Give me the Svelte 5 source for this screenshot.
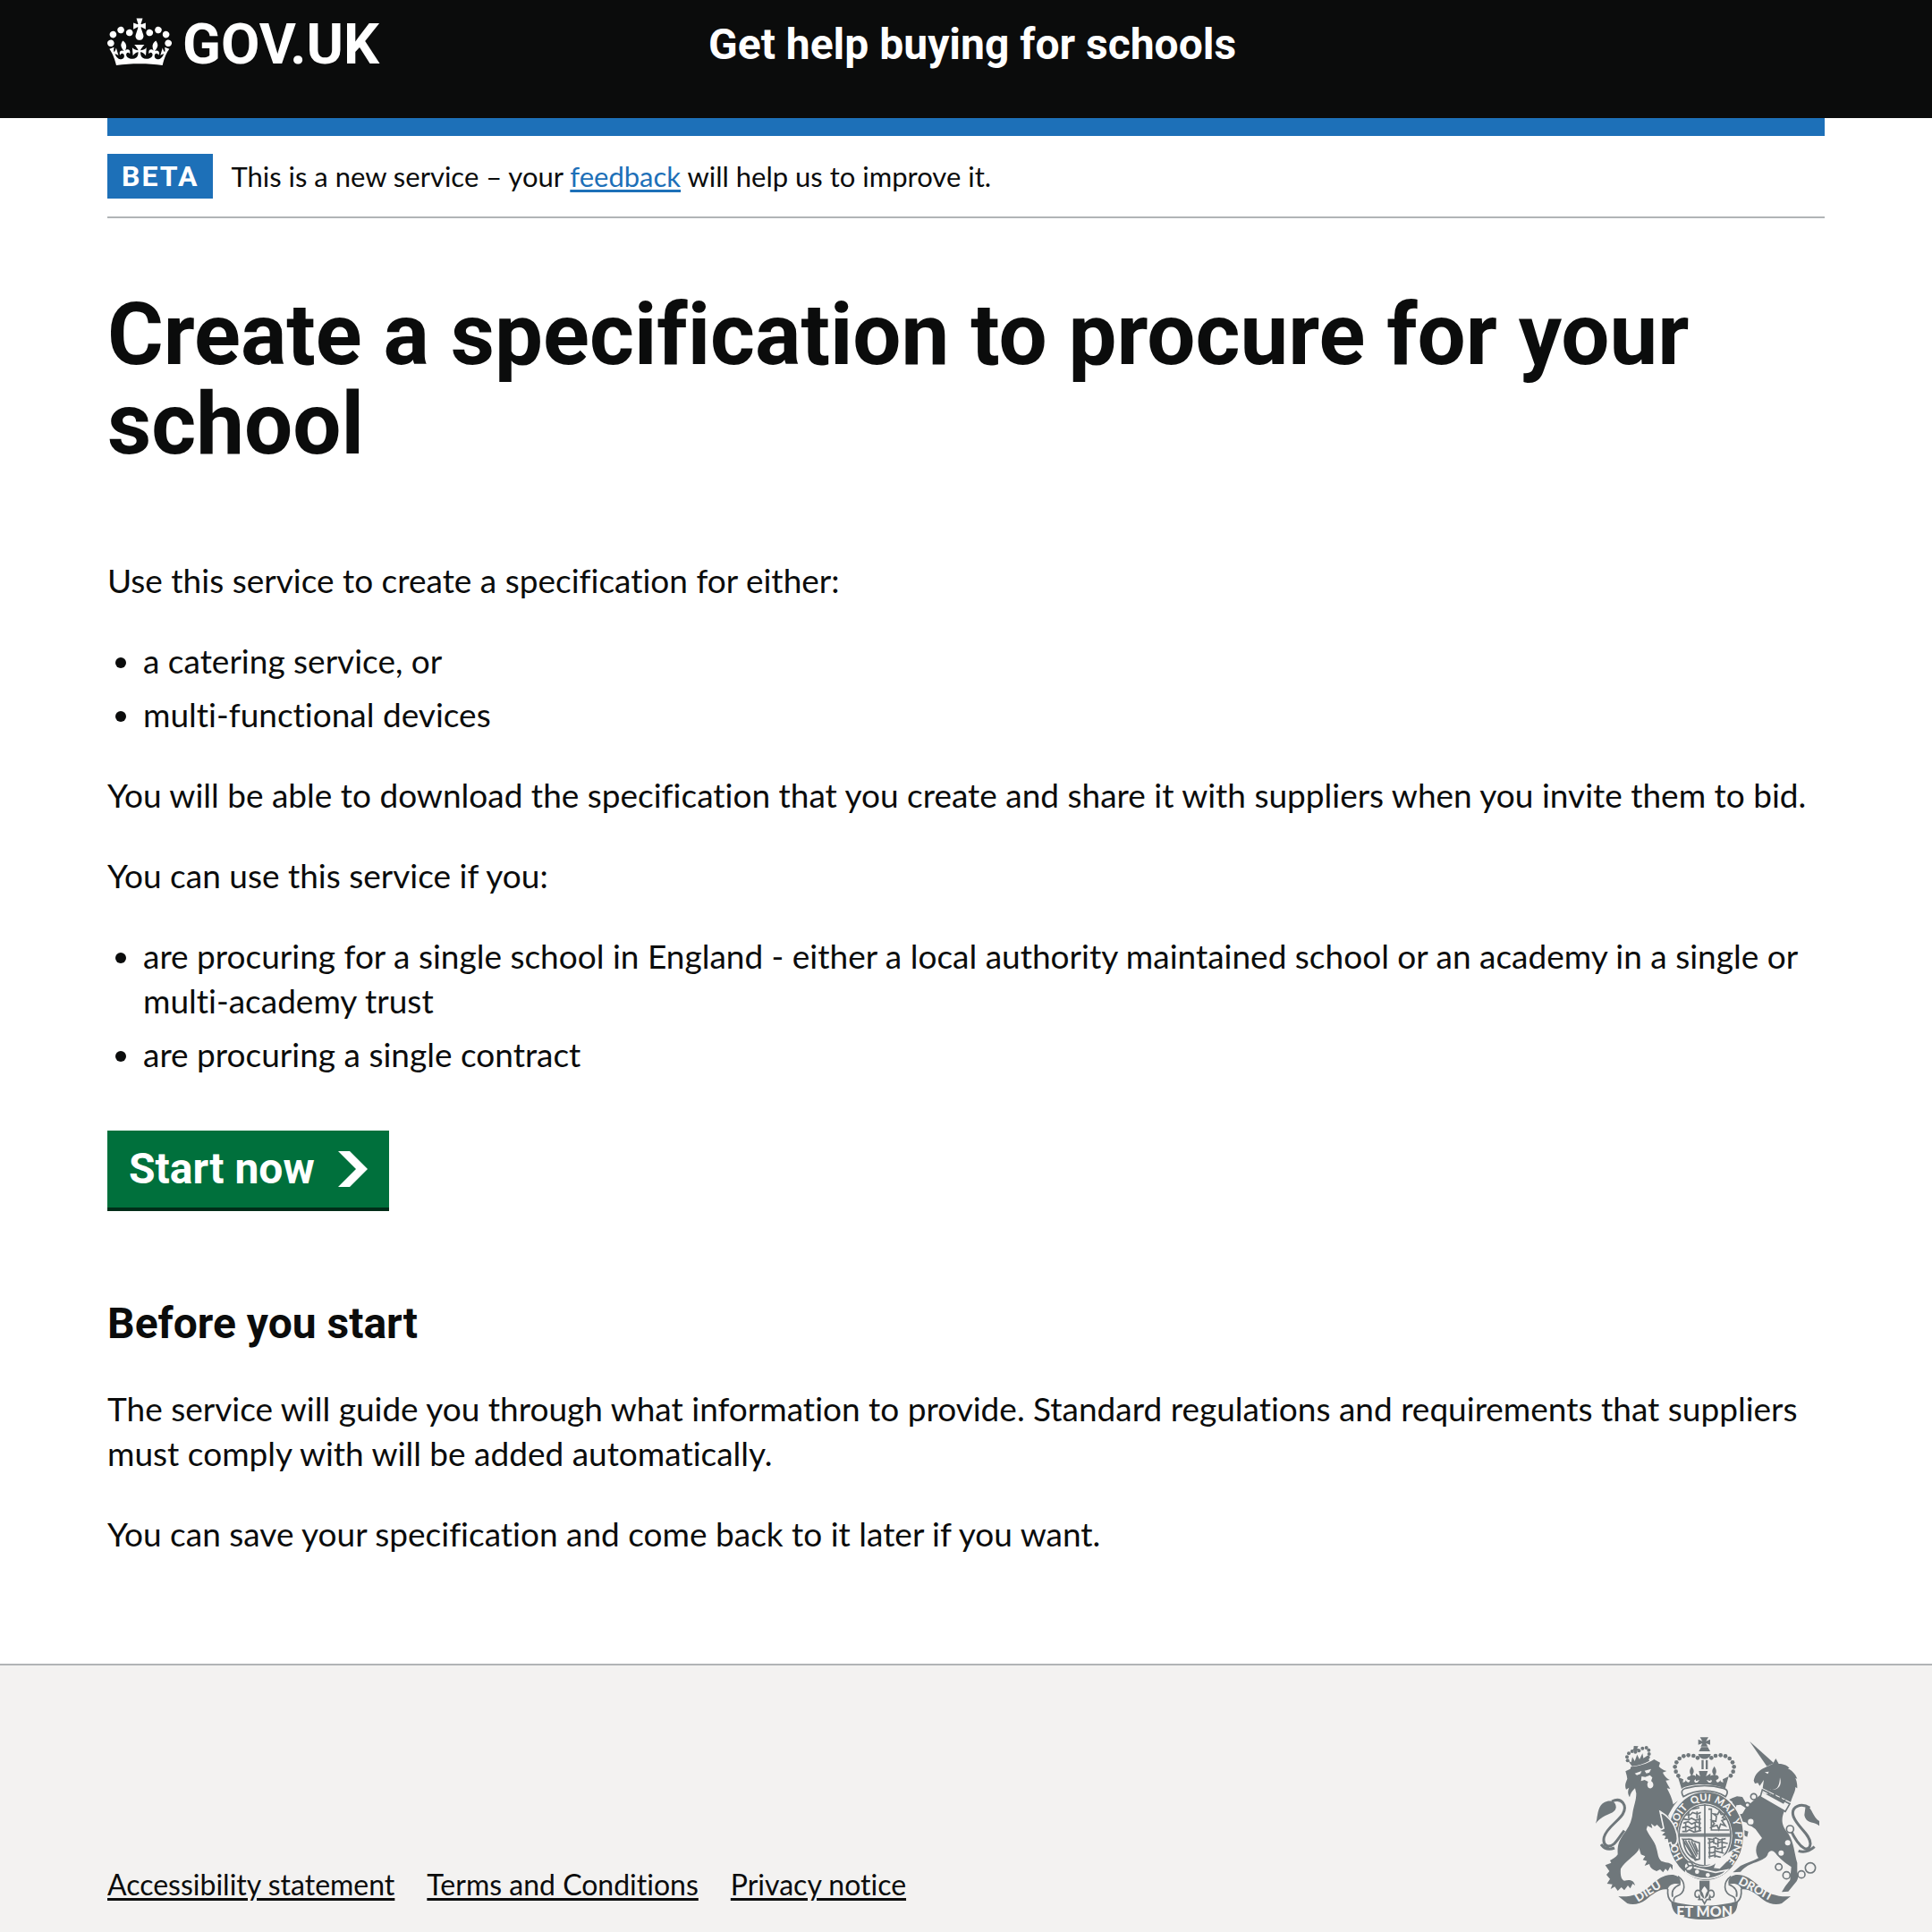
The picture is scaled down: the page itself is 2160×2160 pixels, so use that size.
<script>
  const footerLinks = ['Accessibility statement', 'Terms and Conditions', 'Privacy notice'];
  const beads = [[384, 106], [370, 99], [353, 97], [337, 100], [323, 108], [313, 121], [308, 136], [311, 152], [319, 166]];
  const lionBeads = [[149, 115], [147, 103], [153, 91], [164, 84], [175, 86], [187, 82], [199, 74], [212, 72], [220, 80], [221, 93], [218, 104]];
  const rings = [[572, 236, 10], [551, 264, 8], [562, 320, 12], [694, 345, 12], [656, 472, 11], [682, 500, 12], [732, 497, 12], [762, 475, 17]];
</script>

<svelte:head><title>Create a specification to procure for your school</title></svelte:head>

<header class="header">
  <div class="container header-row">
    <a class="logo" href="#home">
      <svg class="crown" viewBox="0 0 132 97" aria-hidden="true">
        <path fill="currentColor" fill-rule="evenodd" d="M25 30.2c3.5 1.5 7.7-.2 9.1-3.7 1.5-3.6-.2-7.8-3.9-9.2-3.6-1.4-7.6.3-9.1 3.9-1.4 3.5.3 7.5 3.9 9zM9 39.5c3.6 1.5 7.8-.2 9.2-3.7 1.5-3.6-.2-7.8-3.9-9.1-3.6-1.5-7.6.2-9.1 3.8-1.4 3.5.3 7.5 3.8 9zM4.4 57.2c3.5 1.5 7.7-.2 9.1-3.8 1.5-3.6-.2-7.7-3.9-9.1-3.5-1.5-7.6.3-9.1 3.8-1.4 3.5.3 7.6 3.9 9.1zm38.3-21.4c3.5 1.5 7.7-.2 9.1-3.8 1.5-3.6-.2-7.7-3.9-9.1-3.6-1.5-7.6.3-9.1 3.8-1.3 3.6.4 7.7 3.9 9.1zm64.4-5.6c-3.6 1.5-7.8-.2-9.1-3.7-1.5-3.6.2-7.8 3.8-9.2 3.6-1.4 7.7.3 9.2 3.9 1.3 3.5-.4 7.5-3.9 9zm15.9 9.3c-3.6 1.5-7.7-.2-9.1-3.7-1.5-3.6.2-7.8 3.7-9.1 3.6-1.5 7.7.2 9.2 3.8 1.5 3.5-.3 7.5-3.8 9zm4.7 17.7c-3.6 1.5-7.8-.2-9.2-3.8-1.5-3.6.2-7.7 3.9-9.1 3.6-1.5 7.7.3 9.2 3.8 1.3 3.5-.4 7.6-3.9 9.1zM89.3 35.8c-3.6 1.5-7.8-.2-9.2-3.8-1.4-3.6.2-7.7 3.9-9.1 3.6-1.5 7.7.3 9.2 3.8 1.4 3.6-.3 7.7-3.9 9.1zM69.7 17.7l8.9 4.7V9.3l-8.9 2.8c-.2-.3-.5-.6-.9-.9L72.4 0H59.6l3.5 11.2c-.3.3-.6.5-.9.9l-8.8-2.8v13.1l8.8-4.7c.3.3.6.7.9.9l-5 15.4v.1c-.2.8-.4 1.6-.4 2.4 0 4.1 3.1 7.5 7 8.1h.2c.3 0 .7.1 1 .1.4 0 .7 0 1-.1h.2c4-.6 7.1-4.1 7.1-8.1 0-.8-.1-1.7-.4-2.4V34l-5.1-15.4c.4-.2.7-.6 1-.9zM66 92.8c16.9 0 32.8 1.1 47.1 3.2 4-16.9 8.9-26.7 14-33.5l-9.6-3.4c1 4.9 1.1 7.2 0 10.2-1.5-1.4-3-4.3-4.2-8.7L108.6 76c2.8-2 5-3.2 7.5-3.3-4.4 9.4-10 11.9-13.6 11.2-4.3-.8-6.3-4.6-5.6-7.9 1-4.7 5.7-5.9 8-.5 4.3-8.7-3-11.4-7.6-8.8 7.1-7.2 7.9-13.5 2.1-21.1-8 6.1-8.1 12.3-4.5 20.8-4.7-5.4-12.1-2.5-9.5 6.2 3.4-5.2 7.9-2 7.2 3.1-.6 4.3-6.4 7.8-13.5 7.2-10.3-.9-10.9-8-11.2-13.8 2.5-.5 7.1 1.8 11 7.3L80.2 60c-4.1 4.4-8 5.3-12.3 5.4 1.4-4.4 8-11.6 8-11.6H55.5s6.4 7.2 7.9 11.6c-4.2-.1-8-1-12.3-5.4l1.4 16.4c3.9-5.5 8.5-7.7 10.9-7.3-.3 5.8-.9 12.8-11.1 13.8-7.2.6-12.9-2.9-13.5-7.2-.7-5 3.8-8.3 7.1-3.1 2.7-8.7-4.6-11.6-9.4-6.2 3.7-8.5 3.6-14.7-4.6-20.8-5.8 7.6-5 13.9 2.2 21.1-4.7-2.6-11.9.1-7.7 8.8 2.3-5.5 7.1-4.2 8.1.5.7 3.3-1.3 7.1-5.7 7.9-3.5.7-9-1.8-13.5-11.2 2.5.1 4.7 1.3 7.5 3.3l-4.7-15.4c-1.2 4.4-2.7 7.2-4.3 8.7-1.1-3-.9-5.3 0-10.2l-9.5 3.4c5 6.9 9.9 16.7 14 33.5 14.8-2.1 30.8-3.2 47.7-3.2z" />
      </svg>
      <span>GOV.UK</span>
    </a>
    <a class="service" href="#service">Get help buying for schools</a>
  </div>
</header>

<div class="container">
  <div class="phase">
    <strong class="tag">BETA</strong>
    <span>This is a new service – your <a href="#feedback">feedback</a> will help us to improve it.</span>
  </div>

  <main>
    <h1>Create a specification to procure for your school</h1>
    <p>Use this service to create a specification for either:</p>
    <ul>
      <li>a catering service, or</li>
      <li>multi-functional devices</li>
    </ul>
    <p>You will be able to download the specification that you create and share it with suppliers when you invite them to bid.</p>
    <p>You can use this service if you:</p>
    <ul>
      <li>are procuring for a single school in England - either a local authority maintained school or an academy in a single or multi-academy trust</li>
      <li>are procuring a single contract</li>
    </ul>
    <button class="start" type="button">
      Start now
      <svg viewBox="0 0 33 40" aria-hidden="true"><path fill="currentColor" d="M0 0h13l20 20-20 20H0l20-20z" /></svg>
    </button>
    <h2>Before you start</h2>
    <p>The service will guide you through what information to provide. Standard regulations and requirements that suppliers must comply with will be added automatically.</p>
    <p>You can save your specification and come back to it later if you want.</p>
  </main>
</div>

<footer class="footer">
  <div class="container footer-row">
    <nav aria-label="Support links">
      {#each footerLinks as label}
        <a href="#{label.split(' ')[0].toLowerCase()}">{label}</a>
      {/each}
    </nav>
    <svg class="crest" viewBox="42 36 750 612" role="img" aria-label="Royal coat of arms">
      <defs>
        <path id="motto" d="M411 483A99 116 0 0 1 411 251A99 116 0 0 1 411 483" />
      </defs>

      <!-- lion -->
      <g class="ink">
        {#each lionBeads as [x, y]}<circle cx={x} cy={y} r="6" />{/each}
        <path d="M170 66l15 1-4 7 8 3-9 4 1 8-8 1-1-8-9 0 6-6zM151 116l10 5 4-18 8 14 8-22 8 16 10-20 3 16 14-9 6 18c-18 10-38 16-58 18z" />
        <path d="M146 165l-4-14 16-8 2-7c25-2 55-10 78-25l20 11-4 13c8 8 14 12 26 15l-13 5c7 14 14 20 24 25l-14 2c5 12 11 20 15 28l-11-2c9 17 17 32 21 54l16-12c-15 15-22 30-33 50l15 26c14 19 18 39 12 62l-12 10-4-10-10 6-2-14-14 4 6-14-14-4 10-10-18-4 8-8-14-14-8 6-12-10 4 16-16-8-4 12c10 24 28 39 34 64 6 20 4 30 16 42 13 6 28 3 38 14v16l-8-12-8 16-8-8-8 12-10-10-12 6c-11-6-21-8-24-24l-16 6 8-16-14-4 8-12-14-6c-6-20-10-30-6-45 0 10 2 20-2 30-18 25-43 35-60 63-2 22 2 37 12 40 15-4 32-4 36 16l-8-6-8 16-8-10-12 16-10-10-12 12-10-14-14 8 6-16-18-2 10-16-12-14 10-12-14-20 20-8-4-8c8-5 20-10 26-20-2-30 4-45 17-65 20-25 30-45 33-75 4-25 12-40 12-65l-4-17c-8 7-16 17-18 30-8-13-6-23-2-32l-10 6c-6-14-1-24 4-36z" />
        <path d="M42 326c8-22 4-56 28-70 22-12 42-2 40 18-5 24-40 16-68 52z" />
      </g>
      <path class="line thick" d="M96 252c34-16 54 14 36 44-18 26-54 45-62 76-6 30 16 37 34 22 12-12 20-27 34-44M60 396c12 16 26 20 45 12" />
      <path class="paper" d="M173 158l23-8-4 10-12 4zM206 149l22-6-6 12-10 3zM196 168l12 2 16-6 8 8-4 12c10 6 10 20 0 24-12 2-16-12-10-22l-12-6-12 4z" />

      <!-- unicorn -->
      <g class="ink">
        <path d="M558 50l82 74-24 10z" />
        <path d="M572 182c4-22 18-34 34-42l30-14 10-18 10 18c20 0 30 8 36 14l-6 2c14 6 26 18 32 34l-6-2c6 14 6 24 6 34l-6-4c0 14-8 26-16 50l-94-46 4-28-14 20-6-10-10 2z" />
        <path d="M592 232l82 54c-10 26-10 46 14 74 20 32 20 66 30 98v32c6 12 2 22-2 30l-28 34-22 2 12-20 16-20 4-44c-14-10-30-20-48-40-10-16-22-20-30-6-2 15-20 22-40 30-20 6-36 14-52 32l-26 2 26-22c20-10 40-14 60-26-15-25-8-48 12-67l-22-30-30-22-16-4-12 8 16 20 18 6-4 18-34-18-20-38 6-16 32-6 14-24z" />
        <path d="M500 241l16-6 18 2 14 24 18 8-12 10-26-16-14 2-4 20-12 2 2-34-12-6z" />
        <path d="M746 268c22 0 22 36 46 50v16c-18-16-44-6-50-36z" />
      </g>
      <path class="paper" d="M609 154l14-2-4 8zM618 210c34 10 40-8 42-38 10 32-12 48-42 38z" />
      <path class="line paper-fill" d="M601 213l92 47-15 26-84-49z" />
      <path class="ink" d="M607 226l12 1 1-10 7 13 11 2 4-9 6 15 11 1 3-8 6 14 12 2-8 13-74-40z" />
      <path class="line thick" d="M760 274c-30-20-62-4-56 24 8 36 58 62 58 96-2 28-32 28-68-50M722 418c18 6 36 2 54-14" />
      {#each rings as [x, y, r]}<circle class="line paper-fill" cx={x} cy={y} {r} />{/each}
      <circle class="paper" cx="686" cy="391" r="9" /><circle class="paper" cx="664" cy="425" r="9" />

      <!-- garter and shield -->
      <ellipse class="ink edge" cx="411" cy="367" rx="128" ry="149" />
      <ellipse class="paper" cx="408" cy="367" rx="92" ry="108" />
      <ellipse class="line" cx="408" cy="366" rx="87" ry="102" />
      <path class="line" d="M408 262v204M322 362h172M322 368h172" />
      <path class="line detail" d="M345 297h14l8-8 16 5 12-5M336 311l18 3 9-6 14 7 18-4M336 325l16-5 12 8 15-7 16 5M332 340l18-4 13 7 18-7 15 6M332 353h15l9-6 16 8 24-6M354 286v24M382 286v24M344 322v30M376 320v34M390 298v50M366 278l24-5M418 377l17 3 9-6 14 7 20-4M418 392l16-5 12 8 15-7 24 5M420 408l18-4 13 7 28-7M420 424h15l9-6 28 8M420 438l18-5 24 7M424 378v65M438 374v20M452 382v24M466 376v46M442 402v38M420 278h10v70h60M430 338l10-12-9-10 14 3 2-17-10-8 14 2 6-12 6 12 16-2-12 12 10 6-12 4 12 18-16-6-6 18-6-14z" />
      <path class="line detail" d="M334 379c18 2 26-6 36 6l20 6v54l-14 4zM343 383l34 60M353 383l28 54M363 385l21 45M373 391l12 30M336 379c2 38 20 60 46 68" />
      <path class="paper" d="M400 470l22-4 80-52-10 30-34 34z" />
      <path class="ink" d="M376 464c20 12 54 10 68-4l-12 32 52-6c-50 46-110 32-140 2z" />
      <g class="paper letters ring">
        <text><textPath href="#motto" startOffset="13%">HO</textPath></text>
        <text><textPath href="#motto" startOffset="29%">SOIT</textPath></text>
        <text><textPath href="#motto" startOffset="43%">QUI</textPath></text>
        <text><textPath href="#motto" startOffset="54%">MAL</textPath></text>
        <text><textPath href="#motto" startOffset="67%">Y</textPath></text>
        <text><textPath href="#motto" startOffset="73%">PENSE</textPath></text>
      </g>
      <path class="ink edge" d="M344 466l38 10 62 14 40-8c-30 32-90 42-140 8z" />
      <circle class="line paper-fill" cx="354" cy="470" r="15" /><path class="line" d="M344 452l10 16 16-2M336 484l18-14" />
      <circle class="paper" cx="382" cy="488" r="7" /><circle class="paper" cx="418" cy="499" r="7" />
      <path class="ink edge" d="M258 286c24 14 44 34 52 60 10 26 6 46 0 50l-12 4-4-10-10 4-2-14-14 2 6-12-14-4 10-10-18-4 18-10z" />

      <!-- imperial crown -->
      <g class="ink">
        <path d="M392 37h28l-8 13 14-6v18l-14-5 6 11h-24l6-11-14 5V44l14 6zM396 70h22l8 14h-38zM386 93h42c-3 22-39 22-42 0z" />
        {#each beads as [x, y]}<circle cx={x} cy={y} r="7" /><circle cx={814 - x} cy={y} r="7" />{/each}
        <path d="M397 113h7v31h-7zM411 113h7v31h-7z" />
        <path d="M330 210l-12-40 18 8-2 10c8 0 10-4 10-8 4 10 14 12 14 0-10 2-14-10-2-12l6-4c-8-12-4-20 2-30 8 12 10 18 2 30 14-2 18 14 6 18 2 10 12 10 18-2l-12 4v-26l14 10-4-18h30l-6 18 15-10v26l-13-4c6 12 16 12 18 2-12-4-8-20 6-18-8-12-6-18 2-30 6 10 10 18 2 30 14-2 18 14 4 16 0 12 10 10 14 0 0 6 4 8 10 8l-2-10 20-10-12 42c-38-20-116-20-148 0z" />
      </g>
      <path class="line paper-fill" d="M336 236c-10-18-4-24 8-28 42-12 84-12 126 0 14 4 18 12 8 28-42-26-98-26-142 0z" />

      <!-- scroll -->
      <g class="ink">
        <path d="M118 570c40 4 74-8 98-28 34-30 54-46 86-44 20 4 28 18 24 32-20-6-40 0-42 18-24-6-52 16-74 34-20 16-46 18-62 12z" />
        <path d="M696 570c-40 4-74-8-98-28-34-30-54-46-86-44-20 4-28 18-24 32 20-6 40 0 42 18 24-6 52 16 74 34 20 16 46 18 62 12z" />
        <path d="M294 585c54 22 168 22 226 0-4 24-6 36-18 44-46 26-144 26-190 0-10-8-14-20-18-44z" />
      </g>
      <path class="line" d="M318 503c28 20 28 56-6 68-8 4-8 8-8 16M284 546c-2 20 0 32 12 42M326 530c-20 8-32 20-26 42M496 503c-28 20-28 56 6 68 8 4 8 8 8 16M530 546c2 20 0 32-12 42M488 530c20 8 32 20 26 42" />
      <g class="paper letters">
        <text transform="translate(184 590) rotate(-32)">DIEU</text>
        <text class="large" x="407" y="638" text-anchor="middle">ET MON</text>
        <text transform="translate(518 528) rotate(28)">DROIT</text>
      </g>
      <path class="ink" d="M390 518h34v34h-34z" />
      <path class="line paper-fill" d="M407 533c-20 20-14 32-4 40-6-30-30-28-28-8 2 12 12 10 14 4 4 10 0 12-4 12h14l8 14 8-14h14c-4 0-8-2-4-12 2 6 12 8 14-4 2-20-22-22-28 8 10-8 16-20-4-40z" />
    </svg>
  </div>
</footer>

<style>
  :global(body) {
    margin: 0;
    color: #0b0c0c;
    background: #f3f2f1;
    font-family: Lato, Roboto, sans-serif;
    font-size: 37px;
    font-variant-ligatures: none;
    line-height: 50px;
  }
  :global(#app) { background: #fff; }
  .container { margin: 0 120px; }
  .header { color: #fff; background: #0b0c0c; font-family: Roboto, sans-serif; }
  .header-row {
    display: grid;
    grid-template-columns: 35% 1fr;
    align-items: start;
    height: 112px;
    padding-top: 20px;
  }
  .header a { color: inherit; text-decoration: none; font-weight: 700; }
  .logo { display: flex; align-items: flex-start; gap: 12px; font-size: 63px; line-height: 60px; }
  .crown { width: 72px; height: 54px; }
  .service { font-size: 48px; line-height: 60px; }
  .phase {
    display: flex;
    align-items: center;
    gap: 20px;
    padding: 20px 0;
    border-top: 20px solid #1d70b8;
    border-bottom: 2px solid #b1b4b6;
    font-size: 31px;
  }
  .phase a { color: #1d70b8; text-underline-offset: 3px; text-decoration-thickness: 3px; }
  .tag { padding: 0 16px; color: #fff; background: #1d70b8; font-family: Roboto, sans-serif; font-size: 32px; letter-spacing: 2px; }
  main { padding: 80px 0; }
  h1, h2 { font-family: Roboto, sans-serif; }
  h1 { margin: 0 0 100px; font-size: 96px; line-height: 100px; }
  p { margin: 0 0 40px; }
  ul { margin: 0 0 40px; padding-left: 40px; }
  li { margin-bottom: 10px; }
  .start {
    display: flex;
    align-items: center;
    gap: 26px;
    margin: 60px 0 96px;
    padding: 13px 24px;
    border: 0;
    border-bottom: 4px solid #002d18;
    color: #fff;
    background: #00703c;
    font: 700 48px/60px Roboto, sans-serif;
  }
  .start svg { width: 33px; height: 40px; }
  h2 { margin: 0 0 40px; font-size: 48px; line-height: 60px; }
  .footer { border-top: 2px solid #b1b4b6; background: #f3f2f1; font-size: 32px; }
  .footer-row {
    display: flex;
    align-items: flex-end;
    justify-content: space-between;
    padding: 80px 0 14px;
  }
  nav { display: flex; gap: 36px; padding-bottom: 14px; }
  nav a { color: inherit; text-decoration-thickness: 3px; text-underline-offset: 3px; }
  .crest { width: 250px; height: 204px; margin-right: 6px; }
  .ink { fill: #6f777b; }
  .paper { fill: #f3f2f1; }
  .line { fill: none; stroke: #6f777b; stroke-width: 5px; }
  .thick { stroke-width: 9px; }
  .detail { stroke-width: 5px; }
  .line.paper-fill { fill: #f3f2f1; }
  .edge { stroke: #f3f2f1; stroke-width: 5px; }
  .letters { font-family: Lato, sans-serif; font-size: 40px; font-weight: 900; }
  .ring { font-size: 34px; }
  .large { font-size: 48px; }
</style>
